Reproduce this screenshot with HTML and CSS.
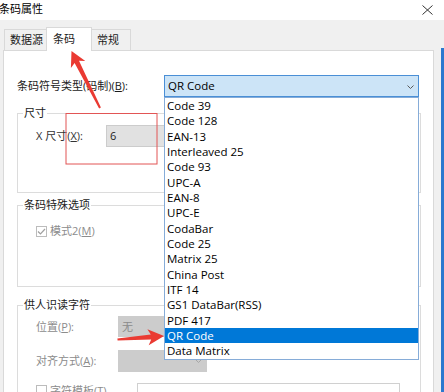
FILE: index.html
```html
<!DOCTYPE html>
<html lang="zh-CN">
<head>
    <meta charset="UTF-8">
    <meta name="viewport" content="width=device-width, initial-scale=1.0">
    <title>条码属性</title>
    <link rel="stylesheet" href="styles.css">
</head>
<body>
<div class="dialog">

    <!-- Barra de título -->
    <div class="titlebar">
        <span class="title">条码属性</span>
        <svg class="close" width="11" height="10" viewBox="0 0 11 10">
            <path d="M0.5 0.5 L10.5 9.5 M10.5 0.5 L0.5 9.5" stroke="#333" stroke-width="1" fill="none"/>
        </svg>
    </div>

    <div class="frame">
        <div class="client">
            <!-- Pestañas -->
            <div class="tabs">
                <div class="tab first">数据源</div>
                <div class="tab active">条码</div>
                <div class="tab last">常规</div>
            </div>

            <div class="panel">
                <div class="row symbology">
                    <label class="lbl-type">条码符号类型(码制)(<u>B</u>):</label>
                    <div class="combo open">
                        <span class="combo-text">QR Code</span>
                        <svg class="chevron" width="7" height="4" viewBox="0 0 7 4">
                            <path d="M0.5 0.5 L3.5 3.5 L6.5 0.5" stroke="#5a5a5a" fill="none"/>
                        </svg>
                        <ul class="dropdown">
                            <li>Code 39</li>
                            <li>Code 128</li>
                            <li>EAN-13</li>
                            <li>Interleaved 25</li>
                            <li>Code 93</li>
                            <li>UPC-A</li>
                            <li>EAN-8</li>
                            <li>UPC-E</li>
                            <li>CodaBar</li>
                            <li>Code 25</li>
                            <li>Matrix 25</li>
                            <li>China Post</li>
                            <li>ITF 14</li>
                            <li>GS1 DataBar(RSS)</li>
                            <li>PDF 417</li>
                            <li class="selected">QR Code</li>
                            <li>Data Matrix</li>
                        </ul>
                    </div>
                </div>

                <fieldset class="group size">
                    <legend>尺寸</legend>
                    <div class="rows">
                        <div class="row">
                            <label class="lbl-x">X 尺寸(<u>X</u>):</label>
                            <div class="edit">6</div>
                        </div>
                    </div>
                </fieldset>

                <fieldset class="group special">
                    <legend>条码特殊选项</legend>
                    <div class="rows">
                        <div class="row check disabled">
                            <svg class="box" width="11" height="11" viewBox="0 0 11 11">
                                <rect x="0.5" y="0.5" width="10" height="10" fill="#fff" stroke="#bcbcbc"/>
                                <path d="M2 5.5 L4.5 8 L9 3" stroke="#a0a0a0" stroke-width="1.2" fill="none"/>
                            </svg>
                            <span>模式2(<u>M</u>)</span>
                        </div>
                    </div>
                </fieldset>

                <fieldset class="group readable">
                    <legend>供人识读字符</legend>
                    <div class="rows">
                        <div class="row disabled pos">
                            <label class="lbl-pos">位置(<u>P</u>):</label>
                            <div class="dcombo">无</div>
                        </div>
                        <div class="row disabled align">
                            <label class="lbl-pos">对齐方式(<u>A</u>):</label>
                            <div class="dcombo">
                                <svg class="chevron" width="7" height="4" viewBox="0 0 7 4">
                                    <path d="M0.5 0.5 L3.5 3.5 L6.5 0.5" stroke="#a6a6a6" fill="none"/>
                                </svg>
                            </div>
                        </div>
                        <div class="row disabled tpl">
                            <svg class="box" width="11" height="11" viewBox="0 0 11 11">
                                <rect x="0.5" y="0.5" width="10" height="10" fill="#fff" stroke="#bcbcbc"/>
                            </svg>
                            <span class="tpl-text">字符模板(<u>T</u>)</span>
                            <div class="tpl-edit"></div>
                        </div>
                    </div>
                </fieldset>
            </div>
        </div>
        <div class="edge"></div>
    </div>

    <!-- Marcas rojas de la captura -->
    <svg class="marks" width="444" height="392" viewBox="0 0 444 392">
        <rect x="66" y="113.5" width="91" height="50.5" fill="none" stroke="#e25555" stroke-width="1"/>
        <polygon fill="#ea3a32" points="71.5,51 85.3,61 79,60.7 100.9,107.6 99.1,108.4 74.6,62.9 70.9,68"/>
        <polygon fill="#ea3a32" points="164,336 147.4,329.2 150.8,334.5 117.4,338.5 117.6,340.5 151.2,339.5 148.7,345.2"/>
    </svg>
</div>
</body>
</html>
```

FILE: styles.css
```css
/* Estilos generales */
html, body {
    margin: 0;
    padding: 0;
}

body {
    width: 444px;
    height: 392px;
    overflow: hidden;
    font-family: "Open Sans", "Noto Sans CJK SC", sans-serif;
    font-size: 11px;
    line-height: 16px;
    color: #1a1a1a;
    background-color: #f0f0f0;
}

u {
    text-underline-offset: 1px;
}

.dialog {
    position: relative;
    height: 392px;
}

/* Barra de título */
.titlebar {
    height: 20px;
    background-color: #fff;
    display: flex;
    align-items: center;
    justify-content: space-between;
}

.title {
    margin-left: -1px;
    margin-top: -2px;
    color: #000;
}

.close {
    margin-right: 11px;
    margin-top: -1px;
}

.frame {
    display: flex;
    height: 372px;
}

.client {
    width: 441px;
}

.edge {
    width: 3px;
    margin-top: 28px;
    background-color: #2b78cf;
}

/* Pestañas */
.tabs {
    display: flex;
    align-items: flex-end;
    height: 30px;
    padding-left: 4px;
    box-sizing: border-box;
}

.tab {
    height: 21px;
    box-sizing: border-box;
    border: 1px solid #d9d9d9;
    border-bottom: none;
    background-color: #f0f0f0;
    line-height: 20px;
    padding-left: 5px;
}

.tab.first {
    width: 42px;
    border-right: none;
}

.tab.active {
    position: relative;
    z-index: 2;
    width: 46px;
    height: 24px;
    margin-bottom: -1px;
    padding-left: 6px;
    line-height: 22px;
    background-color: #fff;
}

.tab.last {
    width: 39px;
    border-left: none;
}

/* Panel */
.panel {
    margin-left: 3px;
    width: 431px;
    height: 360px;
    box-sizing: border-box;
    border: 1px solid #d9d9d9;
    background-color: #fff;
    padding: 24px 0 0 13px;
}

.row {
    display: flex;
    align-items: center;
}

.lbl-type {
    width: 147px;
    color: #1a1a1a;
}

.combo {
    position: relative;
    width: 255px;
    height: 22px;
    box-sizing: border-box;
    border: 1px solid #4a8fd6;
    background-color: #cce4f7;
    display: flex;
    align-items: center;
    justify-content: space-between;
    padding: 0 4px 0 3px;
    color: #000;
    font-size: 11.5px;
}

.combo .chevron {
    margin-top: 1px;
}

.dropdown {
    position: absolute;
    top: calc(100% + 1px);
    left: -1px;
    right: -1px;
    z-index: 5;
    list-style: none;
    margin: 0;
    padding: 0;
    border: 1px solid #86acd8;
    background-color: #fff;
}

.dropdown li {
    height: 15.33px;
    line-height: 15.33px;
    padding-left: 2px;
    color: #000;
    white-space: nowrap;
}

.dropdown li.selected {
    background-color: #0078d7;
    color: #fff;
}

/* Grupos */
.group {
    width: 404px;
    box-sizing: border-box;
    margin: 0;
    padding: 0;
    border: 1px solid #dcdcdc;
    min-inline-size: auto;
}

.group legend {
    margin-left: 5px;
    padding: 0 1px;
    line-height: 16px;
    color: #1a1a1a;
}

.rows {
    padding-left: 18px;
}

.size {
    margin-top: 8px;
    padding-bottom: 45px;
}

.size .rows {
    padding-top: 4px;
}

.lbl-x {
    width: 70px;
    color: #333;
}

.edit {
    width: 90px;
    height: 22px;
    box-sizing: border-box;
    border: 1px solid #cccccc;
    background-color: #e1e1e1;
    line-height: 20px;
    padding-left: 3px;
    color: #222;
}

.special {
    margin-top: 4px;
    padding-bottom: 47px;
}

.special .rows {
    padding-top: 10px;
}

.check .box {
    margin-right: 3px;
}

.disabled {
    color: #8c8c8c;
}

.readable {
    margin-top: 10px;
    height: 120px;
}

.readable .rows {
    padding-top: 3px;
}

.lbl-pos {
    width: 82px;
}

.dcombo {
    width: 89px;
    height: 21px;
    box-sizing: border-box;
    background-color: #cccccc;
    line-height: 20px;
    padding: 0 5px 0 4px;
    color: #8a8a8a;
    display: flex;
    align-items: center;
    justify-content: flex-end;
}

.pos .dcombo {
    justify-content: flex-start;
}

.align {
    margin-top: 13px;
}

.align .dcombo {
    height: 22px;
}

.tpl {
    margin-top: 11px;
    align-items: flex-start;
}

.tpl .box {
    margin-top: 2px;
    margin-right: 3px;
}

.tpl-text {
    width: 87px;
}

.tpl-edit {
    width: 263px;
    height: 24px;
    box-sizing: border-box;
    border: 1px solid #d0d0d0;
    background-color: #fff;
}

/* Marcas */
.marks {
    position: absolute;
    left: 0;
    top: 0;
    z-index: 10;
    pointer-events: none;
}
```
